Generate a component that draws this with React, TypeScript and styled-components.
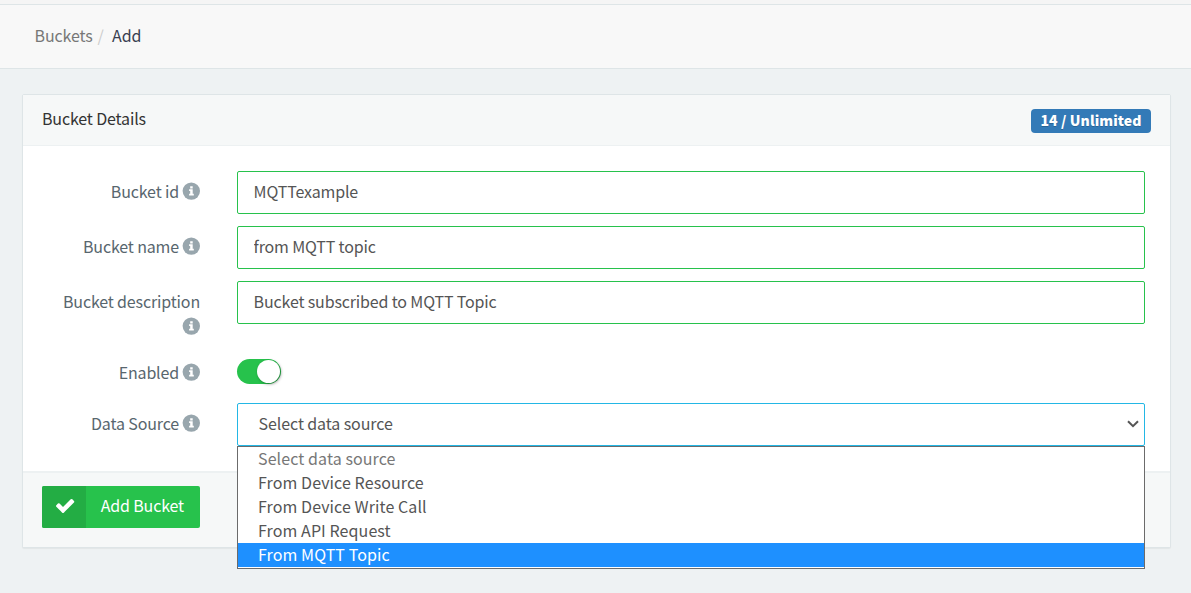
import React from "react";
import styled, { createGlobalStyle, css } from "styled-components";

const GlobalStyle = createGlobalStyle`
  * { box-sizing: border-box; }
  body {
    margin: 0;
    min-height: 593px;
    background: #eef2f3;
    color: #58666e;
    font-family: "Source Sans Pro", "Noto Sans CJK SC", "Noto Sans", sans-serif;
    font-size: 16px;
    line-height: 24px;
    letter-spacing: -0.15px;
  }
`;

const Page = styled.div`
  height: 593px;
  overflow: hidden;
`;

const TopStrip = styled.div`
  height: 5px;
  background: #f5f5f5;
  border-bottom: 1px solid #dee5e7;
`;

const Breadcrumb = styled.nav`
  display: flex;
  align-items: center;
  height: 64px;
  padding: 0 34.6px 4px;
  background: #f8f8f8;
  border-bottom: 1px solid #dee5e7;
`;

const Crumb = styled.span<{ $current?: boolean }>`
  color: ${(p) => (p.$current ? "#3a3f51" : "#777")};
`;

const Slash = styled.span`
  margin: 0 8.5px 0 5px;
  color: #ccc;
`;

const Panel = styled.section`
  margin: 25px 20px 0 22px;
  border: 1px solid #dee5e7;
  border-radius: 2px;
  background: #fff;
  box-shadow: 0 1px 1px rgba(0, 0, 0, 0.05);
`;

const PanelHeader = styled.header`
  display: flex;
  justify-content: space-between;
  align-items: flex-start;
  height: 51px;
  padding: 11px 19px 0;
  background: #f6f8f8;
  border-bottom: 1px solid #edf1f2;
  color: #333;
`;

const Badge = styled.span`
  width: 120px;
  height: 24px;
  margin-top: 3px;
  border-radius: 4px;
  background: #337ab7;
  color: #fff;
  font-size: 14px;
  font-weight: 900;
  letter-spacing: 0.1px;
  line-height: 23px;
  text-align: center;
  white-space: nowrap;
  text-shadow: 0 1px 0 rgba(0, 0, 0, 0.2);
`;

const Form = styled.div`
  display: flex;
  flex-direction: column;
  height: 325px;
  padding: 25px 25px 0 19px;
`;

const Row = styled.div<{ $height: number }>`
  display: grid;
  grid-template-columns: 158px 908px;
  column-gap: 37px;
  height: ${(p) => p.$height}px;
`;

const Label = styled.label<{ $top?: number }>`
  padding-top: ${(p) => p.$top ?? 8}px;
  line-height: 25px;
  text-align: right;
`;

const InfoSvg = styled.svg`
  width: 18px;
  height: 18px;
  margin-left: 3px;
  vertical-align: -2px;
`;

const field = css`
  height: 43px;
  border-radius: 2px;
  background: #fff;
  color: #555;
`;

const Input = styled.input`
  ${field}
  width: 100%;
  padding: 0 15.6px 3px;
  border: 1px solid #27c24c;
  outline: none;
  font: inherit;
  letter-spacing: inherit;
`;

const Switch = styled.div`
  display: flex;
  justify-content: flex-end;
  width: 44px;
  height: 25px;
  padding: 1px;
  border-radius: 13px;
  background: #27c24c;
`;

const Knob = styled.span`
  width: 23px;
  height: 23px;
  border-radius: 50%;
  background: #fff;
  box-shadow: 1px 1px 3px rgba(0, 0, 0, 0.4);
`;

const SelectWrap = styled.div`
  position: relative;
  height: 43px;
`;

const SelectBox = styled.div`
  ${field}
  display: flex;
  align-items: center;
  justify-content: space-between;
  padding: 0 5px 1px 20.6px;
  border: 1px solid #23b7e5;
`;

const SelectValue = styled.span`
  padding-bottom: 2px;
  letter-spacing: -0.1px;
`;

const Menu = styled.ul`
  position: absolute;
  top: 43px;
  left: 0;
  right: 0;
  z-index: 2;
  margin: 0;
  padding: 0 0 1px;
  list-style: none;
  border: 1px solid #6b6b6b;
  background: #fff;
  letter-spacing: 0.09px;
`;

const Option = styled.li<{ $muted?: boolean; $active?: boolean }>`
  height: 24px;
  padding-left: 20px;
  line-height: 22px;
  color: ${(p) => (p.$active ? "#fff" : p.$muted ? "#777" : "#555")};
  background: ${(p) => (p.$active ? "#1e90ff" : "transparent")};
`;

const PanelFooter = styled.footer`
  height: 76px;
  padding: 13px 19px 0;
  border-top: 2px solid #edf1f2;
  background: #f6f8f8;
`;

const AddButton = styled.button`
  display: flex;
  width: 158px;
  height: 42px;
  padding: 0;
  overflow: hidden;
  border: 0;
  border-radius: 2px;
  background: #27c24c;
  color: #fff;
  font: inherit;
  letter-spacing: inherit;
`;

const ButtonIcon = styled.span`
  display: flex;
  align-items: center;
  justify-content: center;
  width: 44px;
  height: 42px;
  padding: 0 0 2px 2px;
  background: #23ad44;
`;

const ButtonText = styled.span`
  flex: 1;
  padding-right: 1.4px;
  line-height: 38px;
  text-align: center;
  white-space: nowrap;
`;

const Info = () => (
  <InfoSvg viewBox="0 0 18 18" aria-hidden="true">
    <circle cx="9.3" cy="9.1" r="8.7" fill="#98a6ad" />
    <path fill="#fff" d="M8.2 4.2h2.5v2.2H8.2zM7.1 7.3h3.6v4.5h1.1v1.8H7.1v-1.8h1.1V9.1H7.1z" />
  </InfoSvg>
);

const Check = () => (
  <svg width="19" height="14" viewBox="151 334 1550 1188" fill="#fff" aria-hidden="true">
    <path d="M1671 566q0 40-28 68l-724 724-136 136q-28 28-68 28t-68-28l-136-136-362-362q-28-28-28-68t28-68l136-136q28-28 68-28t68 28l294 295 656-657q28-28 68-28t68 28l136 136q28 28 28 68z" />
  </svg>
);

const Chevron = () => (
  <svg width="12" height="8" viewBox="0 0 12 8" fill="none" stroke="#555" strokeWidth="2" aria-hidden="true">
    <path d="M1 1.2L6 6.2L11 1.2" />
  </svg>
);

const textFields = [
  { label: "Bucket id", value: "MQTTexample", height: 55 },
  { label: "Bucket name", value: "from MQTT topic", height: 55 },
  { label: "Bucket description", value: "Bucket subscribed to MQTT Topic", height: 78 },
];

const sources = ["From Device Resource", "From Device Write Call", "From API Request", "From MQTT Topic"];

export default function App() {
  return (
    <Page>
      <GlobalStyle />
      <TopStrip />
      <Breadcrumb>
        <Crumb>Buckets</Crumb>
        <Slash>/</Slash>
        <Crumb $current>Add</Crumb>
      </Breadcrumb>
      <Panel>
        <PanelHeader>
          <span>Bucket Details</span>
          <Badge>14 / Unlimited</Badge>
        </PanelHeader>
        <Form>
          {textFields.map((f) => (
            <Row key={f.label} $height={f.height}>
              <Label>
                {f.label}
                <wbr />
                <Info />
              </Label>
              <Input defaultValue={f.value} />
            </Row>
          ))}
          <Row $height={44}>
            <Label $top={1}>
              Enabled
              <Info />
            </Label>
            <Switch>
              <Knob />
            </Switch>
          </Row>
          <Row $height={43}>
            <Label>
              Data Source
              <Info />
            </Label>
            <SelectWrap>
              <SelectBox>
                <SelectValue>Select data source</SelectValue>
                <Chevron />
              </SelectBox>
              <Menu>
                <Option $muted>Select data source</Option>
                {sources.map((s) => (
                  <Option key={s} $active={s === "From MQTT Topic"}>
                    {s}
                  </Option>
                ))}
              </Menu>
            </SelectWrap>
          </Row>
        </Form>
        <PanelFooter>
          <AddButton>
            <ButtonIcon>
              <Check />
            </ButtonIcon>
            <ButtonText>Add Bucket</ButtonText>
          </AddButton>
        </PanelFooter>
      </Panel>
    </Page>
  );
}
